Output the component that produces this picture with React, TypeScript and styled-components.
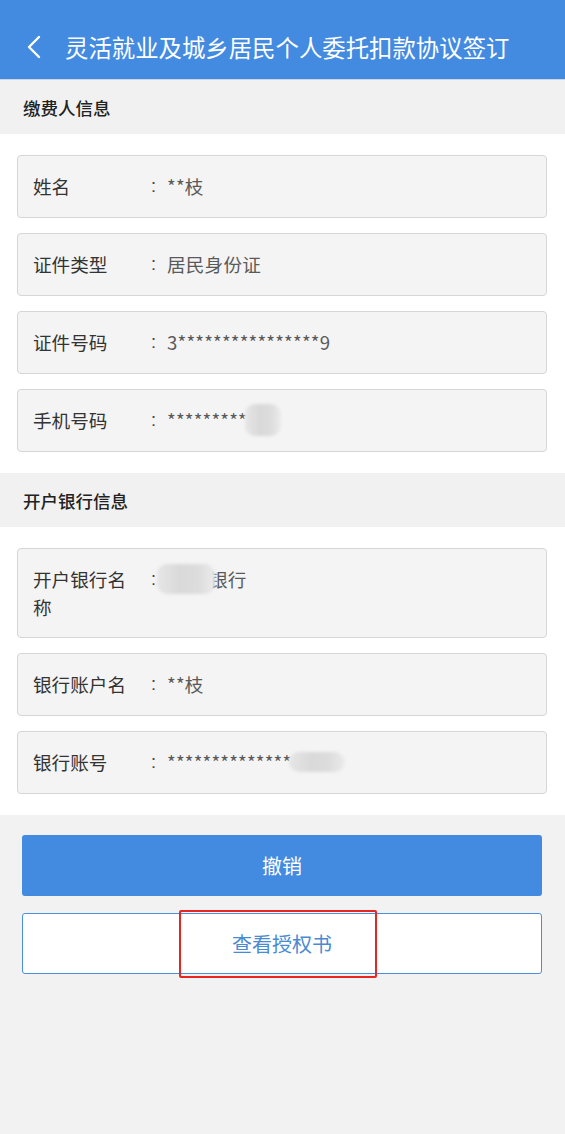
import React from 'react'
import styled, {createGlobalStyle} from 'styled-components'

const GlobalStyle = createGlobalStyle`
    html, body {
        margin: 0;
        padding: 0;
        background: #f2f2f2;
    }
    body {
        font-family: "Noto Sans CJK SC", "Noto Sans", sans-serif;
    }
    * {
        box-sizing: border-box;
    }
`

type FieldType = {
    id: number
    label: string
    value: string
    mask?: 'phone' | 'bank' | 'account'
}

const payerFields: FieldType[] = [
    {id: 1, label: '姓名', value: '**枝'},
    {id: 2, label: '证件类型', value: '居民身份证'},
    {id: 3, label: '证件号码', value: '3****************9'},
    {id: 4, label: '手机号码', value: '*********', mask: 'phone'},
]

const bankFields: FieldType[] = [
    {id: 5, label: '开户银行名称', value: '银行', mask: 'bank'},
    {id: 6, label: '银行账户名', value: '**枝'},
    {id: 7, label: '银行账号', value: '**************', mask: 'account'},
]

const Field = ({field}: { field: FieldType }) => {
    return (
        <Card>
            <Label>{field.label}</Label>
            <Colon>:</Colon>
            <Value>
                {field.mask === 'bank' && <Mask $w={58} $h={30} $left={-10} $right={-6}/>}
                {field.value}
                {field.mask === 'phone' && <Mask $w={36} $h={32} $left={-2} $right={0}/>}
                {field.mask === 'account' && <Mask $w={56} $h={20} $left={-2} $right={0}/>}
            </Value>
        </Card>
    )
}

export default function App() {
    return (
        <Page>
            <GlobalStyle/>
            <Header>
                <BackIcon viewBox="0 0 14 24">
                    <path d="M12 2 L2 12 L12 22" fill="none" stroke="#fff" strokeWidth="2.4" strokeLinecap="round" strokeLinejoin="round"/>
                </BackIcon>
                <Title>灵活就业及城乡居民个人委托扣款协议签订</Title>
            </Header>

            <SectionTitle>缴费人信息</SectionTitle>
            <SectionBody>
                {payerFields.map(f => <Field key={f.id} field={f}/>)}
            </SectionBody>

            <SectionTitle>开户银行信息</SectionTitle>
            <SectionBody>
                {bankFields.map(f => <Field key={f.id} field={f}/>)}
            </SectionBody>

            <Actions>
                <PrimaryButton>撤销</PrimaryButton>
                <OutlineButton>
                    查看授权书
                    <Highlight/>
                </OutlineButton>
            </Actions>
        </Page>
    )
}

const Page = styled.div`
    width: 565px;
    min-height: 1134px;
    background: #f2f2f2;
    display: flex;
    flex-direction: column;
`

const Header = styled.div`
    height: 80px;
    background: #438be0;
    display: flex;
    align-items: center;
    padding: 14px 0 0 27px;
    border-bottom: 1px solid #c9d6e6;
`

const BackIcon = styled.svg`
    width: 14px;
    height: 24px;
    margin-right: 24px;
`

const Title = styled.div`
    color: #fff;
    font-size: 23.4px;
    letter-spacing: 0;
    white-space: nowrap;
`

const SectionTitle = styled.div`
    height: 54px;
    background: #f1f1f1;
    display: flex;
    align-items: center;
    padding-left: 23px;
    font-size: 17.5px;
    font-weight: 500;
    color: #222;
`

const SectionBody = styled.div`
    background: #fff;
    padding: 21px 18px 21px 17px;
    display: flex;
    flex-direction: column;
    gap: 15px;
`

const Card = styled.div`
    min-height: 63px;
    background: #f4f4f4;
    border: 1px solid #d6d6d6;
    border-radius: 4px;
    display: flex;
    align-items: flex-start;
    padding: 16px 10px 16px 15px;
    line-height: 28px;
`

const Label = styled.div`
    width: 104px;
    margin-right: 8px;
    flex-shrink: 0;
    font-size: 18.6px;
    color: #333;
`

const Colon = styled.div`
    position: relative;
    z-index: 1;
    width: 22px;
    flex-shrink: 0;
    font-family: "Liberation Sans", sans-serif;
    font-size: 18px;
    color: #444;
    padding-left: 6px;
`

const Value = styled.div`
    display: flex;
    align-items: center;
    font-size: 18.6px;
    letter-spacing: 0.2px;
    color: #5a5a5a;
    height: 28px;
`

const Mask = styled.span<{ $w: number, $h: number, $left: number, $right: number }>`
    position: relative;
    z-index: 1;
    display: inline-block;
    width: ${p => p.$w}px;
    height: ${p => p.$h}px;
    margin-left: ${p => p.$left}px;
    margin-right: ${p => p.$right}px;
    background: linear-gradient(90deg, #e6e6e6 0%, #d9d9d9 40%, #dcdcdc 70%, #ebebeb 100%);
    border-radius: 10px;
    filter: blur(1.5px);
`

const Actions = styled.div`
    padding: 20px 23px 0 22px;
    display: flex;
    flex-direction: column;
    gap: 17px;
`

const PrimaryButton = styled.button`
    height: 61px;
    border: none;
    border-radius: 3px;
    background: #438be0;
    color: #fff;
    font-family: "Noto Sans CJK SC", sans-serif;
    font-size: 20px;
`

const OutlineButton = styled.button`
    position: relative;
    height: 61px;
    border: 1px solid #4a8ee0;
    border-radius: 3px;
    background: #fff;
    color: #4a8ad2;
    font-family: "Noto Sans CJK SC", sans-serif;
    font-size: 20px;
`

const Highlight = styled.span`
    position: absolute;
    left: 156px;
    top: -4px;
    width: 198px;
    height: 68px;
    border: 2px solid #e8261f;
    border-radius: 2px;
`
